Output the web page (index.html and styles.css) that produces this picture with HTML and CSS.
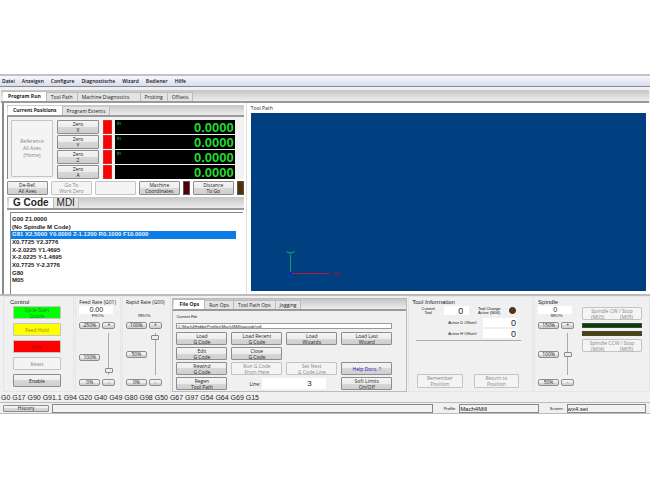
FILE: index.html
```html
<!DOCTYPE html>
<html lang="de">
<head>
<meta charset="utf-8">
<title>Mach4Mill</title>
<link rel="stylesheet" href="styles.css">
</head>
<body>
<div class="app">
  <nav class="menu">
    <a href="#">Datei</a><a href="#">Anzeigen</a><a href="#">Configure</a><a href="#">Diagnostische</a><a href="#">Wizard</a><a href="#">Bediener</a><a href="#">Hilfe</a>
  </nav>
  <div class="tabs main-tabs">
    <button class="tab active">Program Run</button><button class="tab">Tool Path</button><button class="tab wide">Machine Diagnostics</button><button class="tab">Probing</button><button class="tab">Offsets</button>
  </div>

  <main class="upper">
    <section class="left">
      <div class="tabs sub-tabs">
        <button class="tab active">Current Positions</button><button class="tab">Program Extents</button>
      </div>
      <div class="dro">
        <button class="btn reference" disabled>Reference<br>All Axes<br>(Home)</button>
        <div class="axes">
          <div class="axis"><button class="btn">Zero<br>X</button><span class="lamp"></span><output class="readout"><small>in</small>0.0000</output></div>
          <div class="axis"><button class="btn">Zero<br>Y</button><span class="lamp"></span><output class="readout"><small>in</small>0.0000</output></div>
          <div class="axis"><button class="btn">Zero<br>Z</button><span class="lamp"></span><output class="readout"><small>in</small>0.0000</output></div>
          <div class="axis"><button class="btn">Zero<br>A</button><span class="lamp"></span><output class="readout">0.0000</output></div>
        </div>
      </div>
      <div class="position-actions">
        <button class="btn">De-Ref.<br>All Axes</button>
        <button class="btn" disabled>Go To<br>Work Zero</button>
        <button class="btn" disabled aria-label="Unassigned"></button>
        <button class="btn">Machine<br>Coordinates</button>
        <span class="led maroon"></span>
        <button class="btn">Distance<br>To Go</button>
        <span class="led brown"></span>
      </div>
      <div class="tabs code-tabs">
        <button class="tab active">G Code</button><button class="tab">MDI</button>
      </div>
      <div class="code">
        <ol>
          <li>G00 Z1.0000</li>
          <li>(No Spindle M Code)</li>
          <li class="current">G81 X2.5000 Y0.0000 Z-1.1200 R0.1000 F10.0000</li>
          <li>X0.7725 Y2.3776</li>
          <li>X-2.0225 Y1.4695</li>
          <li>X-2.0225 Y-1.4695</li>
          <li>X0.7725 Y-2.3776</li>
          <li>G80</li>
          <li>M05</li>
        </ol>
      </div>
    </section>

    <section class="toolpath">
      <h2>Tool Path</h2>
      <div class="view">
        <svg class="origin" width="70" height="36" viewBox="0 0 70 36" fill="none">
          <path d="M11.500 28V9" stroke="#12a060"/>
          <path d="M7 5l4.500 3L16 5M8 6.500h7" stroke="#12a060" stroke-width=".8"/>
          <path d="M13 27.500h38" stroke="#b81838"/>
          <path d="M54 26.500h8M54 28.500h8" stroke="#701c50"/>
          <path d="M11 27.500h2" stroke="#1818e0" stroke-width="3"/>
        </svg>
      </div>
    </section>
  </main>

  <div class="lower">
    <section class="group control">
      <h2>Control</h2>
      <div class="control-buttons">
        <button class="btn green" disabled>Cycle Start<br>Gcode</button>
        <button class="btn yellow" disabled>Feed Hold</button>
        <button class="btn red" disabled>Stop</button>
        <button class="btn" disabled>Reset</button>
        <button class="btn">Enable</button>
      </div>
    </section>

    <section class="group rate">
      <h2>Feed Rate (G01)</h2>
      <input class="value" aria-label="Feed rate" value="0.00">
      <label class="tiny" for="fro">FRO%</label>
      <div class="override">
        <button class="btn pill max">250%</button><button class="btn pill plus">+</button>
        <button class="btn pill mid low">100%</button><input id="fro" type="range" min="0" max="250" value="12">
        <button class="btn pill min">0%</button><button class="btn pill minus">-</button>
      </div>
    </section>

    <section class="group rate">
      <h2>Rapid Rate (G00)</h2>
      <div class="value-space"></div>
      <label class="tiny" for="rro">RRO%</label>
      <div class="override">
        <button class="btn pill max">100%</button><button class="btn pill plus">+</button>
        <button class="btn pill mid">50%</button><input id="rro" type="range" min="0" max="100" value="94">
        <button class="btn pill min">0%</button><button class="btn pill minus">-</button>
      </div>
    </section>

    <section class="files">
      <div class="tabs ops-tabs">
        <button class="tab active">File Ops</button><button class="tab">Run Ops</button><button class="tab">Tool Path Ops</button><button class="tab">Jogging</button>
      </div>
      <div class="files-body">
        <label class="tiny" for="path">Current File</label>
        <input id="path" class="path" value="C:\Mach4Hobby\Profiles\Mach4Mill\tapcode\roll">
        <div class="ops">
          <button class="btn">Load<br>G Code</button>
          <button class="btn">Load Recent<br>G Code</button>
          <button class="btn">Load<br>Wizards</button>
          <button class="btn">Load Last<br>Wizard</button>
          <button class="btn">Edit<br>G Code</button>
          <button class="btn">Close<br>G Code</button>
          <button class="btn first">Rewind<br>G Code</button>
          <button class="btn" disabled>Run G Code<br>From Here</button>
          <button class="btn" disabled>Set Next<br>G Code Line</button>
          <button class="btn help">Help Docs. ?</button>
          <button class="btn">Regen<br>Tool Path</button>
          <div class="line-field"><label for="line">Line:</label><input id="line" value="3"></div>
          <button class="btn">Soft Limits<br>On/Off</button>
        </div>
      </div>
    </section>

    <section class="group tool">
      <h2>Tool Information</h2>
      <div class="tool-row">
        <label class="tiny" for="tool">Current<br>Tool</label>
        <input id="tool" value="0">
        <span class="tiny">Tool Change<br>Active (M06)</span>
        <span class="dot"></span>
      </div>
      <div class="offsets">
        <label class="tiny" for="doff">Active D Offset#</label><input id="doff" value="0">
        <label class="tiny" for="hoff">Active H Offset#</label><input id="hoff" value="0">
      </div>
      <hr>
      <div class="tool-actions">
        <button class="btn" disabled>Remember<br>Position</button>
        <button class="btn" disabled>Return to<br>Position</button>
      </div>
    </section>

    <section class="group spindle">
      <h2>Spindle</h2>
      <div class="spindle-cols">
        <div class="rate">
          <input class="value" aria-label="Spindle speed" value="0">
          <label class="tiny" for="sro">SRO%</label>
          <div class="override">
            <button class="btn pill max">150%</button><button class="btn pill plus">+</button>
            <button class="btn pill mid">100%</button><input id="sro" type="range" min="50" max="150" value="100">
            <button class="btn pill min">50%</button><button class="btn pill minus">-</button>
          </div>
        </div>
        <div class="spindle-actions">
          <button class="btn" disabled>Spindle CW / Stop<span class="codes"><span>(M03)</span><span>(M05)</span></span></button>
          <span class="bar bar-green"></span>
          <span class="bar bar-olive"></span>
          <button class="btn" disabled>Spindle CCW / Stop<span class="codes"><span>(M04)</span><span>(M05)</span></span></button>
        </div>
      </div>
    </section>
  </div>

  <p class="modes">G0 G17 G90 G91.1 G94 G20 G40 G49 G80 G98 G50 G67 G97 G54 G64 G69 G15</p>
  <footer class="status">
    <button class="btn">History</button>
    <input aria-label="Message" value="">
    <label class="tiny" for="profile">Profile:</label>
    <input id="profile" value="Mach4Mill">
    <label class="tiny" for="screen">Screen:</label>
    <input id="screen" value="wx4.set">
  </footer>
</div>
</body>
</html>
```

FILE: styles.css
```css
* { box-sizing: border-box; }
body { margin: 0; background: #fff; color: #222; font: 5px/6px "Open Sans", "Noto Sans", sans-serif; }
button, input { font: inherit; color: inherit; margin: 0; padding: 0; min-width: 0; border-radius: 0; }
button { white-space: nowrap; }
h2, p, ol { margin: 0; padding: 0; font-weight: normal; }
h2 { font: 6px/8px "Liberation Sans", Arial, sans-serif; white-space: nowrap; }

.app { margin-top: 74px; background: #f0f0f1; border-top: 2px solid #c0c3c5; border-bottom: 1px solid #bbb; }

.menu { display: flex; gap: 7px; height: 11px; padding: 0 2px; align-items: center; background: linear-gradient(#f6f7fd, #d9dcee); border-bottom: 1px solid #858991; }
.menu a { color: #111; text-decoration: none; font-weight: 600; }

.tabs { display: flex; align-items: flex-end; background: linear-gradient(#c6c6c6, #ededed); border-bottom: 2px solid #999; }
.tab { height: 9px; padding: 0 4px; background: #e4e4e4; border: 1px solid #bbb; border-width: 1px 1px 0 0; line-height: 7px; }
.tab.active { height: 10px; padding: 0 5px; background: #fff; font-weight: bold; }
.main-tabs { height: 13px; margin: 3px 1px 0; padding-left: 2px; }
.wide { padding-right: 10px; }

.upper { display: grid; grid-template-columns: 3fr 5fr; height: 193px; background: #fff; border-bottom: 2px solid #bbb; }
.left { margin-left: 2px; padding: 2px 0 0 3px; border-left: 2px solid #8b8b8b; }
.sub-tabs { height: 12px; padding-left: 1px; }
.left .sub-tabs .tab { border-top-color: #ccc; }
.dro { display: flex; gap: 4px; padding: 3px 9px 2px 3px; height: 62px; background: #f2f2f2; border-left: 1px solid #888; }

.btn { background: linear-gradient(#f4f4f4, #ededed 50%, #d8d8d8 50%, #cfcfcf); border: 1px solid #8d8d8d; border-radius: 1px; line-height: 6px; }
.btn:disabled { background: #f4f4f4; border-color: #c4c4c4; color: #858585; }
.reference { width: 42px; line-height: 7px; }
.axes { flex: 1; display: grid; grid-template-rows: repeat(4, 13px); gap: 2px; }
.axis { display: grid; grid-template-columns: 42px 10px 1fr; column-gap: 3px; }
.lamp { margin-left: 1px; background: #f00; border: 1px solid #c33; }
.readout { position: relative; background: #000; color: #22dc30; text-align: right; padding-right: 1px; font: bold 13px/15px "Liberation Sans", Arial, sans-serif; overflow: hidden; }
.readout small { position: absolute; left: 2px; top: 1px; font: 5px/5px "Liberation Sans", Arial, sans-serif; }

.position-actions { display: grid; grid-template-columns: 1fr 1fr 1fr 1fr 7px 1fr 7px; gap: 3px; height: 14px; margin: 2px 0; }
.led { border: 1px solid #555; }
.maroon { background: #540006; }
.brown { background: #553000; }

.code-tabs { height: 13px; padding-left: 2px; }
.code-tabs .tab { height: 11px; padding: 0 3px; font: 10px/10px "Liberation Sans", Arial, sans-serif; }
.code-tabs .tab.active { font-weight: bold; padding: 0 4px; }
.code { height: 82px; margin: 2px 1px 0 3px; padding: 3px 7px 0 0; border: solid #888; border-width: 1px 0 0 1px; }
.code ol { display: grid; grid-auto-rows: 1fr; height: 69px; list-style: none; font: bold 6px/7px "Liberation Sans", Arial, sans-serif; white-space: nowrap; }
.code li { padding-left: 1px; }
.current { background: #0c7ce6; color: #e8f4ff; }

.toolpath { display: flex; flex-direction: column; margin-left: 2px; padding: 0 4px 3px 4px; border-left: 1px solid #ddd; }
.toolpath h2 { font: 5px/10px "Open Sans", sans-serif; }
.view { position: relative; flex: 1; background: #004080; }
.origin { position: absolute; left: 28px; bottom: 9px; }

.lower { display: grid; grid-template-columns: 72fr 46fr 50fr 237fr 126fr 117fr; column-gap: 1px; height: 96px; padding-left: 3px; }
.group { padding: 1px 3px 0; border: 1px solid #e6e6e8; }
.group.rate { padding-right: 0; }
.rate h2 { font: 5px/8px "Open Sans", "Noto Sans", sans-serif; }
.control { padding-left: 6px; }
.control-buttons { display: grid; grid-template-rows: repeat(5, 13px); gap: 4px; width: 48px; margin-left: 3px; }
.control-buttons .green { background: #0f0; color: #168a16; }
.control-buttons .yellow { background: #ff0; color: #8a8a20; }
.control-buttons .red { background: #f00; color: #a01010; }

.rate .value, .value-space { display: block; width: 34px; height: 8px; border: 0; text-align: center; }
.rate .value { background: #fff; font: 7px/8px "Liberation Sans", Arial, sans-serif; }
.tiny { font: 4px/4px "Liberation Sans", Arial, sans-serif; color: #111; }
.rate > .tiny { display: block; width: 37px; text-align: center; }
.override { display: grid; grid-template: 7px 50px 7px / 21px 13px; column-gap: 2px; margin-top: 4px; }
.pill { height: 7px; border-radius: 2px; line-height: 5px; }
.mid { align-self: center; }
.low { margin-top: 7px; }
.override input { appearance: none; writing-mode: vertical-lr; direction: rtl; width: 9px; height: 42px; justify-self: center; align-self: center; background: linear-gradient(90deg, transparent 4px, #aaa 4px, #aaa 5px, transparent 5px); }
.override input::-webkit-slider-thumb { appearance: none; width: 8px; height: 5px; background: #eee; border: 1px solid #888; border-radius: 1px; }

.files { margin: 2px 0 0; border: 1px solid #bbb; overflow: hidden; }
.ops-tabs { height: 12px; padding-left: 1px; }
.files-body { padding: 4px 14px 0 3px; }
.files-body .tiny { display: block; }
.path { display: block; width: 100%; height: 6px; margin: 4px 0 3px; border: 1px solid #999; background: #fff; font: 4px/4px "Liberation Sans", Arial, sans-serif; }
.ops { display: grid; grid-template-columns: repeat(4, 1fr); grid-auto-rows: 13px; gap: 2px 4px; }
.first { grid-column: 1; }
.help { color: #1515c0; }
.line-field { grid-column: 2 / 4; display: flex; align-items: center; gap: 2px; padding: 0 11px 0 18px; }
.line-field input { flex: 1; height: 11px; border: 0; background: #fff; text-align: center; padding-left: 30px; font: 8px/10px "Liberation Sans", Arial, sans-serif; }

.tool-row { display: grid; grid-template-columns: 32px 25px 1fr 7px; align-items: center; padding-right: 13px; text-align: center; }
.tool-row input, .offsets input { width: 100%; height: 9px; border: 0; background: #fff; font: 9px/9px "Liberation Sans", Arial, sans-serif; text-align: right; padding-right: 6px; }
.dot { width: 7px; height: 7px; border-radius: 50%; background: #5d3514; border: 1px solid #3c220c; }
.offsets { display: grid; grid-template-columns: auto 34px; justify-content: end; align-items: center; gap: 2px 6px; margin-top: 3px; padding-right: 12px; }
.offsets input { padding-right: 1px; }
.tool hr { margin: 2px 8px 0 4px; border: 0; border-top: 1px solid #aaa; }
.tool-actions { display: grid; grid-template-columns: 1fr 1fr; gap: 11px; height: 13px; margin: 33px 10px 0 5px; }

.spindle-cols { display: flex; gap: 7px; }
.spindle-actions { flex: 1; display: flex; flex-direction: column; gap: 3px; padding: 1px 4px 0 0; }
.spindle-actions .btn { height: 13px; }
.codes { display: flex; justify-content: space-around; }
.bar { height: 5px; border: 1px solid #444; }
.bar-green { background: #004400; }
.bar-olive { background: #484800; }

.modes { padding: 1px 1px 0; font: 7px/9px "Liberation Sans", Arial, sans-serif; white-space: nowrap; }
.status { display: grid; grid-template-columns: 46fr 379fr 20fr 79fr 22fr 79fr; column-gap: 3px; align-items: center; padding: 1px 4px 0 3px; border-top: 1px solid #bbb; }
.status input { width: 100%; height: 9px; border: 1px solid #888; background: #f2f2f2; font: 6px/7px "Liberation Sans", Arial, sans-serif; }
.status .btn { height: 7px; line-height: 5px; }
.status .tiny { text-align: right; }
```
